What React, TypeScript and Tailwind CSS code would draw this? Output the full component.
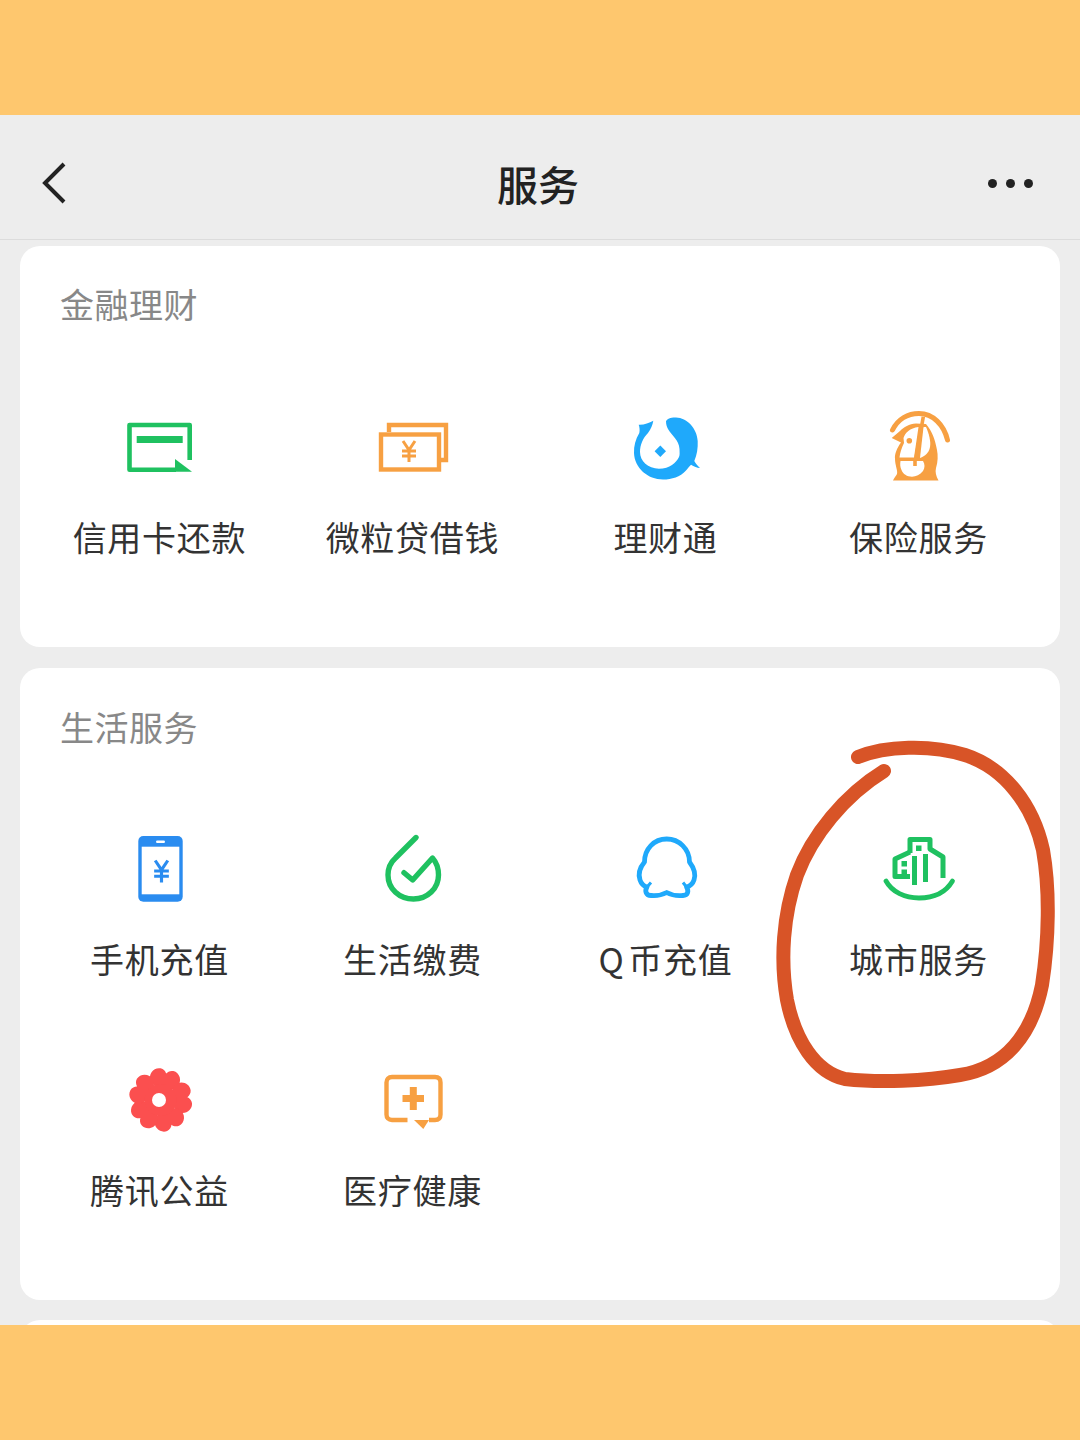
import React from 'react';

const GREEN = '#1fc160';
const ORANGE = '#f7a042';
const BLUE = '#1fa9fb';

const CardIcon = () => (
    <svg viewBox="0 0 80 80" className="w-20 h-20" fill="none">
        <path d="M69.7 52V17H9.5v44.7H56" stroke={GREEN} strokeWidth="4.6" strokeLinejoin="round" />
        <rect x="16.7" y="28" width="46" height="7" fill={GREEN} />
        <path d="M55 51L72 63.8H55Z" fill={GREEN} />
    </svg>
);

const YenMark = ({ x, y, s, color }: { x: number; y: number; s: number; color: string }) => (
    <path
        d={`M${x - 6 * s} ${y - 10 * s}L${x} ${y - 1 * s}L${x + 6 * s} ${y - 10 * s}M${x - 7 * s} ${y}H${x + 7 * s}M${x - 7 * s} ${y + 5 * s}H${x + 7 * s}M${x} ${y - 1 * s}V${y + 11 * s}`}
        stroke={color}
        strokeWidth={3 * s}
        fill="none"
    />
);

const LoanIcon = () => (
    <svg viewBox="0 0 80 80" className="w-20 h-20" fill="none">
        <path d="M16 24V17H73V52H68" stroke={ORANGE} strokeWidth="4.4" />
        <rect x="8" y="26.5" width="58" height="35" stroke={ORANGE} strokeWidth="4.4" />
        <YenMark x={36} y={43} s={1} color={ORANGE} />
    </svg>
);

const FundIcon = () => (
    <svg viewBox="0 0 80 80" className="w-20 h-20">
        <path
            d="M27.3 12.7C23 15 18 17 12.7 16.7C13.5 19 14 22 13.3 25C9.5 31 7.8 38 8 45C8.5 60 22 71.5 37 71.5C46 71.5 54 69 60 62.5C62 60 64 57.5 65 56.7C68 58.5 71 60 74 60C71.5 57.5 69.5 55.5 68.3 53C71 47 72 40 71.7 33C71 20 61 10 50 9.5C45 9.3 41 10.5 40 13.3C40 17 41 19 42 21C46 28 53 32 53.5 41C53.5 44 54 47 53 49C50 55 44 60.7 33 60.7C22 60.7 14 53 14 44C14 37 17 30 22 25C25 21 26.5 17 27.3 12.7Z"
            fill={BLUE}
        />
        <path d="M34.3 37.6L40 43.3L34.3 49L28.6 43.3Z" fill={BLUE} />
    </svg>
);

const InsuranceIcon = () => (
    <svg viewBox="0 0 80 80" className="w-20 h-20" fill="none">
        <path d="M13.5 22C19 11 29 5.5 40 5.5C54 5.5 65 17 68.5 32" stroke={ORANGE} strokeWidth="5" strokeLinecap="round" />
        <path
            d="M37 15.5C30 16 25 19 21 23L12.7 30L22 34.5C18 40 15.5 46 16 51C16 57 19 63 18 66C17 68 15 70 14 72.5H59.5C57 68 56 64 57 60C59 54 59 47 58 42C56 31 53 23 47 16Z"
            fill={ORANGE}
        />
        <path d="M39.5 19C31 20 26 25 24.5 30L25 35C22.5 40 21 45 20.5 49.5H35Z" fill="white" />
        <path d="M44.5 19L47 19C50 26 52 33 51 39C50 45 46 48 41 50Z" fill="white" />
        <path d="M21.5 53H44C46 56 46 60 44 63C41 67 37 68.7 33 68.7C28 68.7 24 66 22.5 62C21 59 21 56 21.5 53Z" fill="white" />
        <circle cx="30.3" cy="32.7" r="2.8" fill={ORANGE} />
        <path d="M44.3 8.7L37.2 49M36 52V58" stroke={ORANGE} strokeWidth="3.6" />
    </svg>
);

const PhoneIcon = () => (
    <svg viewBox="0 0 80 80" className="w-20 h-20" fill="none">
        <rect x="18.3" y="7" width="44.4" height="65.7" rx="5" fill="#2a8cf0" />
        <rect x="21.7" y="17.7" width="37.6" height="47.6" fill="white" />
        <rect x="36" y="11.5" width="9" height="2.4" rx="1.2" fill="white" />
        <YenMark x={41.5} y={42} s={1.05} color="#2a8cf0" />
    </svg>
);

const BillIcon = () => (
    <svg viewBox="0 0 80 80" className="w-20 h-20" fill="none">
        <path
            d="M43 8.5L22.5 29C17.5 33.5 15 39.5 15 46C15 60 26.5 70 40.5 70C54.5 70 65.5 59.5 65.5 46C65.5 39.5 63.5 33.5 59.5 29L39.7 51L31 43.7"
            stroke={GREEN}
            strokeWidth="5.4"
            strokeLinecap="round"
            strokeLinejoin="round"
        />
    </svg>
);

const QQIcon = () => (
    <svg viewBox="0 0 80 80" className="w-20 h-20" fill="none">
        <path
            d="M40.7 10C28 10 18.5 20 18.5 33C13.5 39 12 45 14 51C15 54 17 57 21 58C18.5 62 20 66.5 25 66.5C30 67 35 66.5 40.7 63.5C46 66.5 52 67 57 66.5C62 66.5 63 62 60.5 58C64.5 57 67 54 68 51C70 45 68 39 63.5 33C63.5 20 53 10 40.7 10Z"
            stroke={BLUE}
            strokeWidth="4.8"
            strokeLinejoin="round"
        />
        <path d="M21 58L25 53.5M60.5 58L57 53.5" stroke={BLUE} strokeWidth="3" />
    </svg>
);

const CityIcon = () => (
    <svg viewBox="0 0 80 80" className="w-20 h-20" fill="none">
        <path d="M7 52C13 63 26 69 40 69C55 69 67 63 73.5 52" stroke={GREEN} strokeWidth="4.8" strokeLinecap="round" />
        <path d="M31 24V10.5H51V20L64 28V49" stroke={GREEN} strokeWidth="5" strokeLinejoin="round" />
        <path d="M31 47.5H16V30L31 23" stroke={GREEN} strokeWidth="5" strokeLinejoin="round" />
        <path d="M35.5 27V56M46.5 25V53" stroke={GREEN} strokeWidth="5" />
        <rect x="37" y="16.5" width="5.5" height="5.5" fill={GREEN} />
        <rect x="22.5" y="32" width="5.5" height="5.5" fill={GREEN} />
        <rect x="22.5" y="40.5" width="5.5" height="5.5" fill={GREEN} />
    </svg>
);

const FlowerIcon = () => (
    <svg viewBox="0 0 80 80" className="w-20 h-20">
        {[0, 72, 144, 216, 288].map((deg) => (
            <path
                key={deg}
                transform={`translate(40.5 40) rotate(${deg + 12})`}
                d="M0 -6L-13.5 -16C-18 -23 -13 -31 -6.5 -31C-3.5 -31 -1 -29 0 -27C1 -29 3.5 -31 6.5 -31C13 -31 18 -23 13.5 -16Z"
                fill="#fb4f4f"
            />
        ))}
        <circle cx="40.5" cy="40" r="16" fill="#fb4f4f" />
        <circle cx="39" cy="40" r="7" fill="white" />
    </svg>
);

const MedicalIcon = () => (
    <svg viewBox="0 0 80 80" className="w-20 h-20" fill="none">
        <path
            d="M34.5 60H19C15.5 60 13.5 58 13.5 54.5V22.5C13.5 19 15.5 17 19 17H62C65.5 17 67.5 19 67.5 22.5V54.5C67.5 58 65.5 60 62 60H56"
            stroke={ORANGE}
            strokeWidth="4.4"
        />
        <path d="M41 60H56L50.3 69Z" fill={ORANGE} />
        <path d="M29.5 38.5H51M40.3 27V50" stroke={ORANGE} strokeWidth="7" />
    </svg>
);

const finance = [
    { id: 'card', label: '信用卡还款', icon: <CardIcon /> },
    { id: 'loan', label: '微粒贷借钱', icon: <LoanIcon /> },
    { id: 'fund', label: '理财通', icon: <FundIcon /> },
    { id: 'insurance', label: '保险服务', icon: <InsuranceIcon /> },
];

const life = [
    { id: 'phone', label: '手机充值', icon: <PhoneIcon /> },
    { id: 'bill', label: '生活缴费', icon: <BillIcon /> },
    { id: 'qq', label: <>Q<span className="ml-[4px]">币充值</span></>, icon: <QQIcon /> },
    { id: 'city', label: '城市服务', icon: <CityIcon /> },
    { id: 'charity', label: '腾讯公益', icon: <FlowerIcon /> },
    { id: 'medical', label: '医疗健康', icon: <MedicalIcon /> },
];

const ServiceItem = ({ label, icon, low }: { label: React.ReactNode; icon: React.ReactNode; low?: boolean }) => (
    <div className="flex flex-col items-center">
        {icon}
        <span className={`${low ? 'mt-[26px] mb-[1px]' : 'mt-[25px] mb-[2px]'} text-[34px] leading-[48px] tracking-[0.75px] text-[#333333] whitespace-nowrap`}>
            {label}
        </span>
    </div>
);

export default function App() {
    return (
        <div
            className="relative w-[1080px] h-[1440px] flex flex-col overflow-hidden bg-[#ededed]"
            style={{ fontFamily: '"Noto Sans CJK SC", "Noto Sans", sans-serif' }}
        >
            <div className="h-[115px] shrink-0 bg-[#fec76e]" />

            <header className="h-[125px] shrink-0 grid grid-cols-3 items-center pl-[40px] pr-[47px] pt-[12px] border-b border-[#dcdcdc]">
                <svg viewBox="0 0 28 44" className="w-7 h-11">
                    <path d="M24 3L5 22L24 41" fill="none" stroke="#222222" strokeWidth="4" />
                </svg>
                <h1 className="text-center ml-[3px] text-[41px] leading-none font-medium text-[#222222]">服务</h1>
                <div className="flex justify-end gap-[9px]">
                    <span className="w-[9px] h-[9px] rounded-full bg-[#222222]" />
                    <span className="w-[9px] h-[9px] rounded-full bg-[#222222]" />
                    <span className="w-[9px] h-[9px] rounded-full bg-[#222222]" />
                </div>
            </header>

            <main className="flex-1 min-h-0 overflow-hidden px-5 pt-[6px]">
                <section className="h-[401px] rounded-[20px] bg-white pl-[13px] pr-[15px] pt-[34px]">
                    <h2 className="pl-[27px] mb-[80px] text-[34px] leading-[48px] tracking-[0.5px] text-[#888888]">金融理财</h2>
                    <div className="grid grid-cols-4">
                        {finance.map((item) => (
                            <ServiceItem key={item.id} label={item.label} icon={item.icon} />
                        ))}
                    </div>
                </section>

                <section className="mt-[21px] h-[632px] rounded-[20px] bg-white pl-[13px] pr-[15px] pt-[35px]">
                    <h2 className="pl-[27px] mb-[78px] text-[34px] leading-[48px] tracking-[0.5px] text-[#888888]">生活服务</h2>
                    <div className="grid grid-cols-4 gap-y-[76px]">
                        {life.map((item) => (
                            <ServiceItem key={item.id} label={item.label} icon={item.icon} low />
                        ))}
                    </div>
                </section>

                <section className="mt-[20px] h-[200px] rounded-[20px] bg-white" />
            </main>

            <div className="h-[115px] shrink-0 bg-[#fec76e]" />

            {/* hand drawn circle on top of the screenshot */}
            <svg viewBox="0 0 1080 1440" className="absolute inset-0 w-[1080px] h-[1440px] pointer-events-none" fill="none">
                <path
                    d="M858 757C885 746 930 744 965 755C1005 768 1033 805 1043 850C1050 890 1049 940 1042 985C1032 1035 1005 1068 960 1075C925 1081 880 1083 845 1079C815 1072 795 1040 787 1000C780 960 783 915 797 875C812 835 845 795 884 771"
                    stroke="#d85427"
                    strokeWidth="14"
                    strokeLinecap="round"
                />
            </svg>
        </div>
    );
}
